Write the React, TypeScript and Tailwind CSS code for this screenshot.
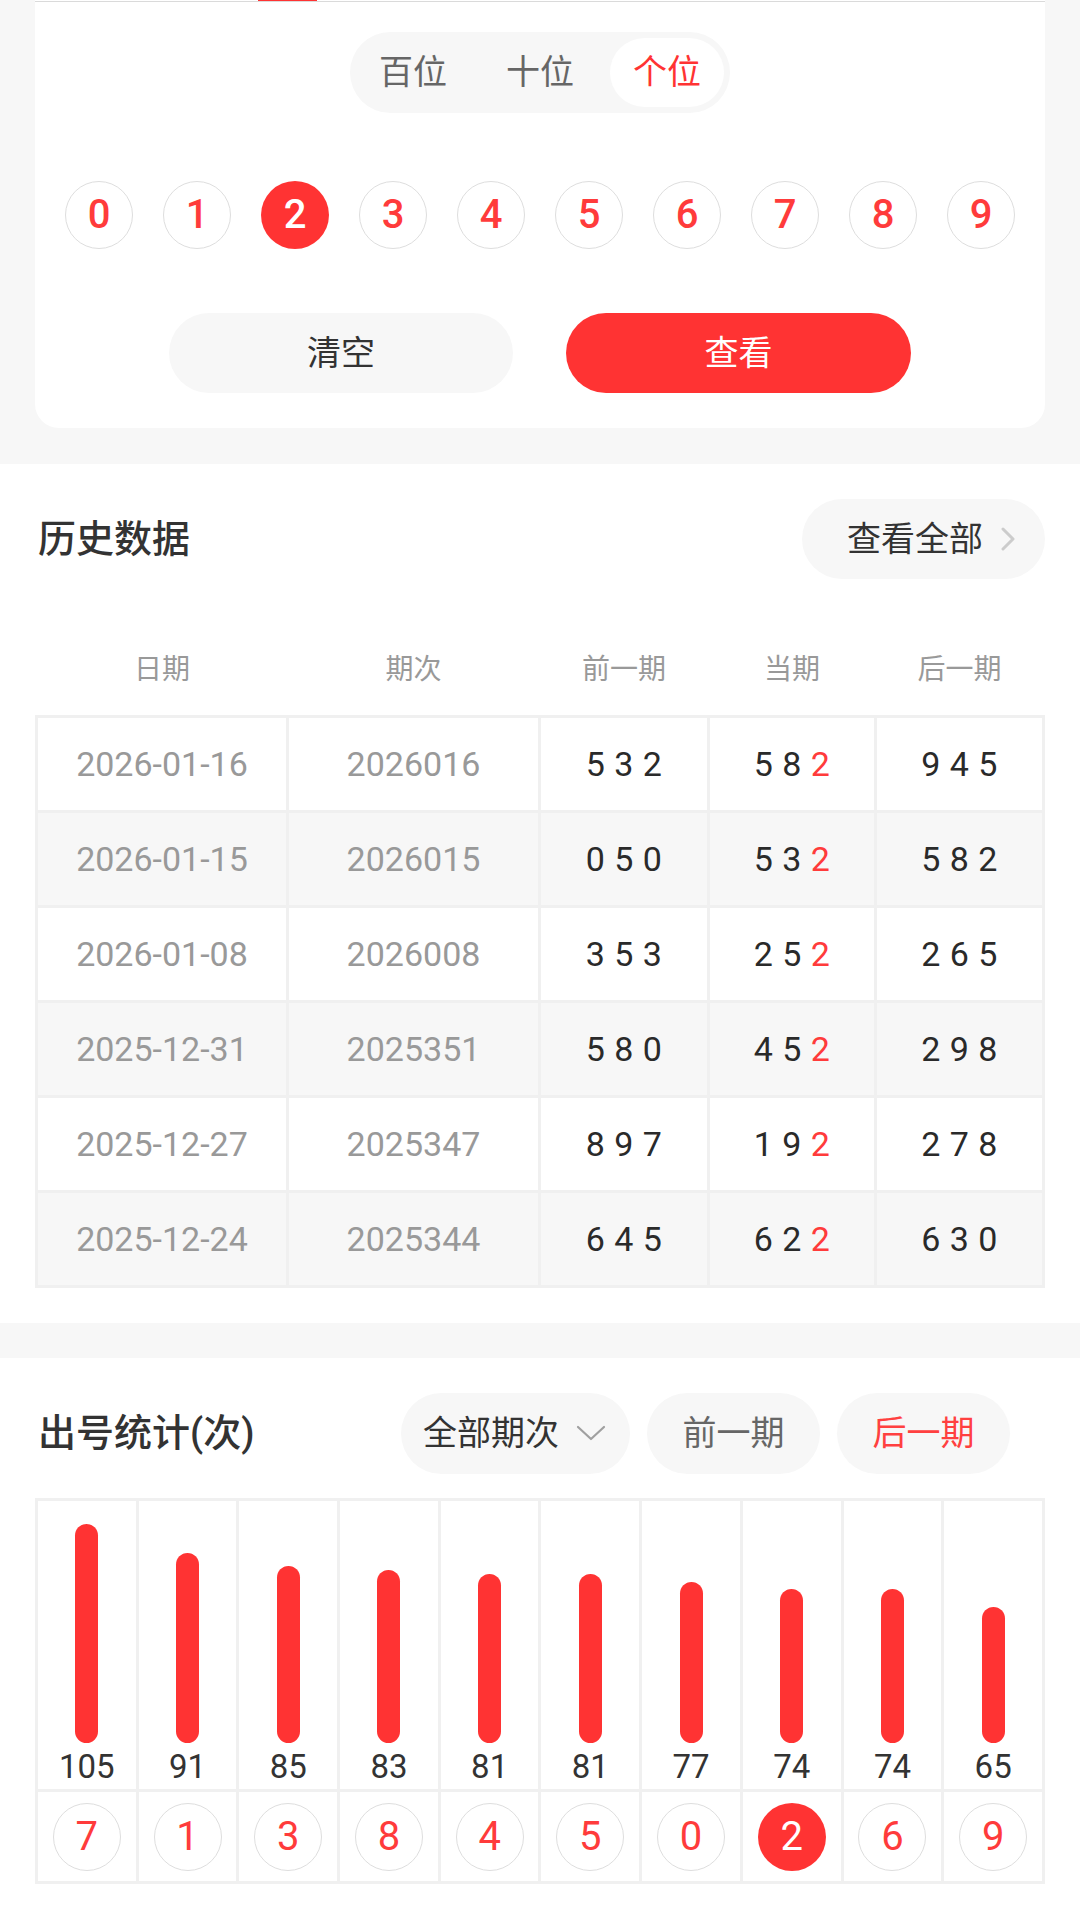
import React from "react";

const rows = [
  ["2026-01-16", "2026016", "532", "582", "945"],
  ["2026-01-15", "2026015", "050", "532", "582"],
  ["2026-01-08", "2026008", "353", "252", "265"],
  ["2025-12-31", "2025351", "580", "452", "298"],
  ["2025-12-27", "2025347", "897", "192", "278"],
  ["2025-12-24", "2025344", "645", "622", "630"],
];

const stats = [
  { n: 7, c: 105 },
  { n: 1, c: 91 },
  { n: 3, c: 85 },
  { n: 8, c: 83 },
  { n: 4, c: 81 },
  { n: 5, c: 81 },
  { n: 0, c: 77 },
  { n: 2, c: 74 },
  { n: 6, c: 74 },
  { n: 9, c: 65 },
];

function Digits({ v, highlightLast }: { v: string; highlightLast?: boolean }) {
  const chars = v.split("");
  return (
    <span className="text-[34px] text-[#2a2a2a] tracking-[0.5px]">
      {chars.map((ch, i) => (
        <React.Fragment key={i}>
          {i > 0 ? " " : ""}
          <span className={highlightLast && i === chars.length - 1 ? "text-[#ff3b3b]" : ""}>{ch}</span>
        </React.Fragment>
      ))}
    </span>
  );
}

function Ball({ n, active, bold }: { n: number; active?: boolean; bold?: boolean }) {
  const w = bold ? " font-medium" : "";
  return (
    <div
      className={
        active
          ? "w-[68px] h-[68px] rounded-full bg-[#ff3333] text-white flex items-center justify-center text-[40px] leading-none" + w
          : "w-[68px] h-[68px] rounded-full border border-[#dedede] bg-white text-[#ff3b3b] flex items-center justify-center text-[40px] leading-none" + w
      }
    >
      {n}
    </div>
  );
}

export default function App() {
  return (
    <div className="w-[1080px] h-[1919px] overflow-hidden bg-[#f7f7f7] font-['Roboto','Noto_Sans_CJK_SC',sans-serif]">
      {/* Top selector card */}
      <div className="px-[35px] pb-[36px]">
        <div className="bg-white rounded-b-[24px] h-[428px] flex flex-col items-center">
          <div className="w-full h-[2px] relative">
            <div className="absolute left-[223px] top-0 w-[59px] h-[1px] bg-[#ff3333]" />
            <div className="absolute left-0 right-0 top-[1px] h-[1px] bg-[#dadada]" />
          </div>
          <div className="mt-[30px] h-[81px] w-[380px] rounded-full bg-[#f7f7f7] p-[6px] flex gap-[13px]">
            <div className="w-[114px] h-[69px] flex items-center justify-center text-[34px] text-[#666]">百位</div>
            <div className="w-[114px] h-[69px] flex items-center justify-center text-[34px] text-[#666]">十位</div>
            <div className="w-[114px] h-[69px] rounded-full bg-white flex items-center justify-center text-[34px] text-[#ff3333]">个位</div>
          </div>
          <div className="mt-[68px] flex gap-[30px]">
            {[0, 1, 2, 3, 4, 5, 6, 7, 8, 9].map((n) => (
              <Ball key={n} n={n} active={n === 2} bold />
            ))}
          </div>
          <div className="mt-[64px] flex gap-[53px]">
            <div className="w-[344px] h-[80px] rounded-full bg-[#f7f7f7] flex items-center justify-center text-[34px] text-[#333]">清空</div>
            <div className="w-[345px] h-[80px] rounded-full bg-[#ff3333] flex items-center justify-center text-[34px] text-white">查看</div>
          </div>
        </div>
      </div>

      {/* History */}
      <div className="bg-white px-[35px] pt-[35px] pb-[35px]">
        <div className="h-[80px] flex items-center justify-between">
          <div className="pl-[3px] text-[38px] font-medium text-[#333]">历史数据</div>
          <div className="w-[243px] h-[80px] rounded-full bg-[#f7f7f7] flex items-center pl-[45px] gap-[17px]">
            <span className="text-[34px] text-[#333]">查看全部</span>
            <svg width="16" height="24" viewBox="0 0 16 24" fill="none">
              <polyline points="3,2 13,12 3,22" stroke="#cccccc" strokeWidth="3" strokeLinecap="round" strokeLinejoin="round" />
            </svg>
          </div>
        </div>
        <div className="mt-[59px] h-[64px] px-[3px] grid grid-cols-[248px_249px_166px_164px_165px] gap-x-[3px] items-center text-[28px] text-[#999]">
          <div className="text-center">日期</div>
          <div className="text-center">期次</div>
          <div className="text-center">前一期</div>
          <div className="text-center">当期</div>
          <div className="text-center">后一期</div>
        </div>
        <div className="mt-[13px] bg-[#f0f0f0] p-[3px] grid grid-cols-[248px_249px_166px_164px_165px] gap-[3px]">
          {rows.map((r, i) => {
            const bg = i % 2 === 0 ? "bg-white" : "bg-[#f7f7f7]";
            return (
              <React.Fragment key={i}>
                <div className={`${bg} h-[92px] flex items-center justify-center text-[34px] text-[#999]`}>{r[0]}</div>
                <div className={`${bg} h-[92px] flex items-center justify-center text-[34px] text-[#999]`}>{r[1]}</div>
                <div className={`${bg} h-[92px] flex items-center justify-center`}>
                  <Digits v={r[2]} />
                </div>
                <div className={`${bg} h-[92px] flex items-center justify-center`}>
                  <Digits v={r[3]} highlightLast />
                </div>
                <div className={`${bg} h-[92px] flex items-center justify-center`}>
                  <Digits v={r[4]} />
                </div>
              </React.Fragment>
            );
          })}
        </div>
      </div>

      <div className="h-[35px] bg-[#f7f7f7]" />

      {/* Stats */}
      <div className="bg-white px-[35px] pt-[35px] pb-[35px]">
        <div className="h-[81px] flex items-center pr-[35px]">
          <div className="pl-[3px] text-[38px] font-medium text-[#333]">出号统计(次)</div>
          <div className="ml-auto flex gap-[17px]">
            <div className="w-[229px] h-[81px] rounded-full bg-[#f7f7f7] flex items-center pl-[22px] gap-[17px]">
              <span className="text-[34px] text-[#333]">全部期次</span>
              <svg width="30" height="17" viewBox="0 0 30 17" fill="none">
                <polyline points="2,2 15,14 28,2" stroke="#a0a0a0" strokeWidth="2.2" strokeLinecap="round" strokeLinejoin="round" />
              </svg>
            </div>
            <div className="w-[173px] h-[81px] rounded-full bg-[#f7f7f7] flex items-center justify-center text-[34px] text-[#666]">前一期</div>
            <div className="w-[173px] h-[81px] rounded-full bg-[#f7f7f7] flex items-center justify-center text-[34px] text-[#ff4040]">后一期</div>
          </div>
        </div>
        <div className="mt-[24px] bg-[#f0f0f0] p-[3px] grid grid-cols-10 gap-[3px]">
          {stats.map((s) => (
            <div key={"b" + s.n} className="bg-white h-[288px] flex flex-col items-center justify-end pb-[2px]">
              <div className="w-[23px] rounded-full bg-[#ff3333]" style={{ height: `${Math.round((s.c * 219) / 105)}px` }} />
              <div className="mt-[4px] h-[40px] leading-[40px] text-[33px] text-[#333]">{s.c}</div>
            </div>
          ))}
          {stats.map((s) => (
            <div key={"n" + s.n} className="bg-white h-[89px] flex items-center justify-center">
              <Ball n={s.n} active={s.n === 2} />
            </div>
          ))}
        </div>
      </div>
    </div>
  );
}
